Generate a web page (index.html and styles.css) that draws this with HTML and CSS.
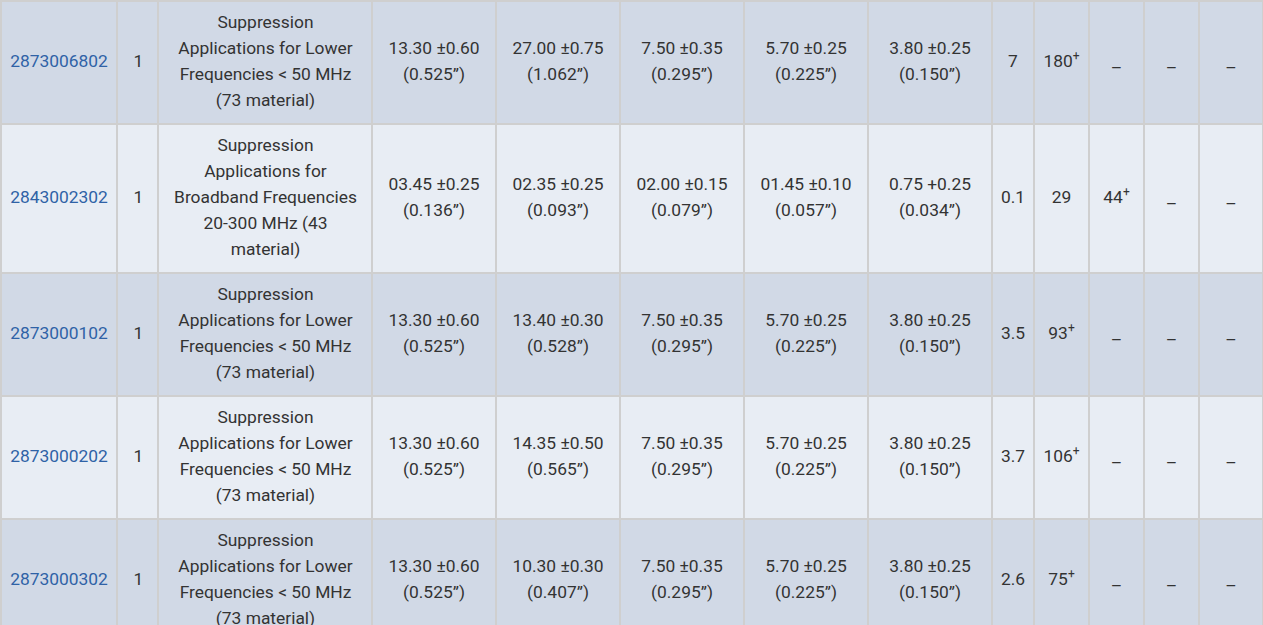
FILE: index.html
```html
<!DOCTYPE html>
<html lang="en">
<head>
<meta charset="utf-8">
<title>Ferrite parts</title>
<link rel="stylesheet" href="styles.css">
</head>
<body>
<div class="wrap">
<table class="parts">
  <colgroup>
    <col class="w-part"><col class="w-qty"><col class="w-desc">
    <col class="w-dim"><col class="w-dim"><col class="w-dim"><col class="w-dim"><col class="w-dim">
    <col class="w-wt"><col class="w-z"><col class="w-z"><col class="w-z"><col class="w-last">
  </colgroup>
  <tbody>
    <tr class="odd">
      <td><a href="#">2873006802</a></td>
      <td>1</td>
      <td>Suppression Applications for Lower Frequencies &lt; 50 MHz (73 material)</td>
      <td>13.30 ±0.60<br>(0.525”)</td>
      <td>27.00 ±0.75<br>(1.062”)</td>
      <td>7.50 ±0.35<br>(0.295”)</td>
      <td>5.70 ±0.25<br>(0.225”)</td>
      <td>3.80 ±0.25<br>(0.150”)</td>
      <td>7</td>
      <td>180<sup>+</sup></td>
      <td><span class="na">–</span></td>
      <td><span class="na">–</span></td>
      <td><span class="na">–</span></td>
    </tr>
    <tr class="even">
      <td><a href="#">2843002302</a></td>
      <td>1</td>
      <td>Suppression Applications for Broadband Frequencies 20-300 MHz (43 material)</td>
      <td>03.45 ±0.25<br>(0.136”)</td>
      <td>02.35 ±0.25<br>(0.093”)</td>
      <td>02.00 ±0.15<br>(0.079”)</td>
      <td>01.45 ±0.10<br>(0.057”)</td>
      <td>0.75 +0.25<br>(0.034”)</td>
      <td>0.1</td>
      <td>29</td>
      <td>44<sup>+</sup></td>
      <td><span class="na">–</span></td>
      <td><span class="na">–</span></td>
    </tr>
    <tr class="odd">
      <td><a href="#">2873000102</a></td>
      <td>1</td>
      <td>Suppression Applications for Lower Frequencies &lt; 50 MHz (73 material)</td>
      <td>13.30 ±0.60<br>(0.525”)</td>
      <td>13.40 ±0.30<br>(0.528”)</td>
      <td>7.50 ±0.35<br>(0.295”)</td>
      <td>5.70 ±0.25<br>(0.225”)</td>
      <td>3.80 ±0.25<br>(0.150”)</td>
      <td>3.5</td>
      <td>93<sup>+</sup></td>
      <td><span class="na">–</span></td>
      <td><span class="na">–</span></td>
      <td><span class="na">–</span></td>
    </tr>
    <tr class="even">
      <td><a href="#">2873000202</a></td>
      <td>1</td>
      <td>Suppression Applications for Lower Frequencies &lt; 50 MHz (73 material)</td>
      <td>13.30 ±0.60<br>(0.525”)</td>
      <td>14.35 ±0.50<br>(0.565”)</td>
      <td>7.50 ±0.35<br>(0.295”)</td>
      <td>5.70 ±0.25<br>(0.225”)</td>
      <td>3.80 ±0.25<br>(0.150”)</td>
      <td>3.7</td>
      <td>106<sup>+</sup></td>
      <td><span class="na">–</span></td>
      <td><span class="na">–</span></td>
      <td><span class="na">–</span></td>
    </tr>
    <tr class="odd">
      <td><a href="#">2873000302</a></td>
      <td>1</td>
      <td>Suppression Applications for Lower Frequencies &lt; 50 MHz (73 material)</td>
      <td>13.30 ±0.60<br>(0.525”)</td>
      <td>10.30 ±0.30<br>(0.407”)</td>
      <td>7.50 ±0.35<br>(0.295”)</td>
      <td>5.70 ±0.25<br>(0.225”)</td>
      <td>3.80 ±0.25<br>(0.150”)</td>
      <td>2.6</td>
      <td>75<sup>+</sup></td>
      <td><span class="na">–</span></td>
      <td><span class="na">–</span></td>
      <td><span class="na">–</span></td>
    </tr>
  </tbody>
</table>
</div>
</body>
</html>
```

FILE: styles.css
```css
html, body {
  margin: 0;
  padding: 0;
  background: #ffffff;
  overflow: hidden;
}

.wrap {
  width: 100%;
  overflow: hidden;
}

.parts {
  table-layout: fixed;
  width: 1264px;
  border-collapse: separate;
  border-spacing: 2px;
  background: #cfcfcf;
  font-family: Roboto, "Liberation Sans", Arial, sans-serif;
  font-size: 17.4px;
  line-height: 26px;
  color: #333333;
}

.w-part { width: 114px; }
.w-qty { width: 39px; }
.w-desc { width: 212px; }
.w-dim { width: 122px; }
.w-wt { width: 40px; }
.w-z { width: 53px; }
.w-last { width: 62px; }

.parts td {
  padding: 7px 4px 10px;
  text-align: center;
  vertical-align: middle;
}

.parts td:nth-child(2) {
  padding-left: 6px;
}

.parts td:nth-child(3) {
  padding: 7px 8px 10px 9px;
}

.parts tr.odd td {
  background: #d1d9e6;
}

.parts tr.even td {
  background: #e8edf4;
}

.parts a {
  color: #2f62a6;
  text-decoration: none;
}

.parts sup {
  font-size: 12px;
  line-height: 0;
  vertical-align: 7px;
}

.na {
  line-height: 0;
  vertical-align: -7px;
}
```
